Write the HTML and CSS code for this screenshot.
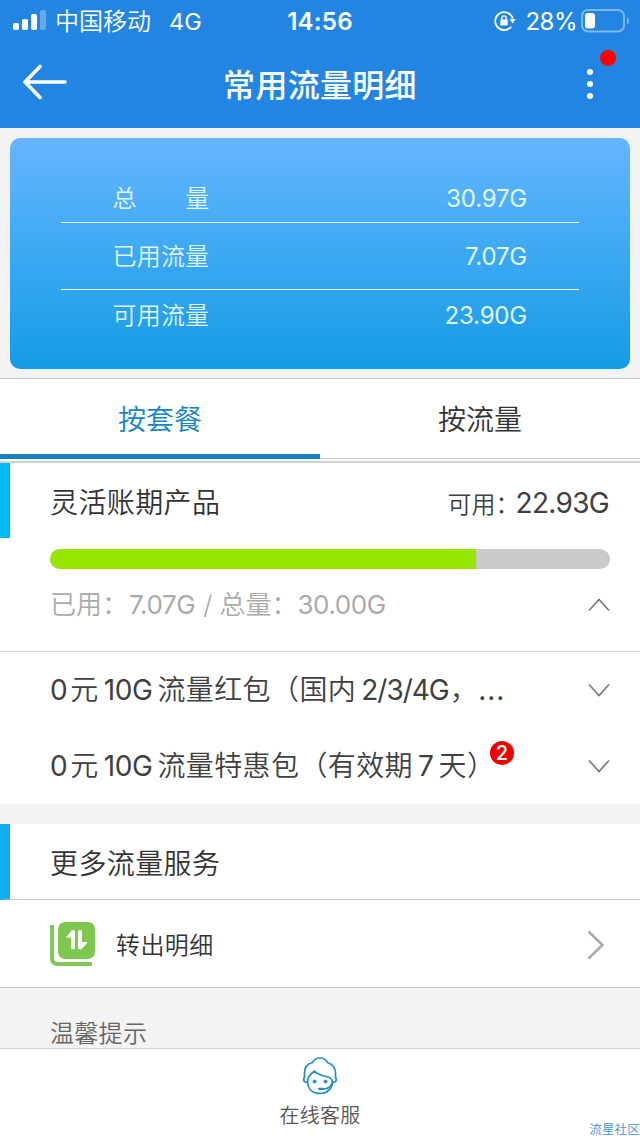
FILE: index.html
```html
<!DOCTYPE html>
<html lang="zh-CN">
<head>
<meta charset="utf-8">
<title>常用流量明细</title>
<link rel="stylesheet" href="styles.css">
</head>
<body>
<div class="screen">
  <header class="header">
    <div class="status">
      <div class="status-left">
        <svg class="signal" width="34" height="22" viewBox="0 0 34 22" fill="#fff"><rect x="0" y="14" width="6" height="7" rx="1.8"/><rect x="9" y="10" width="6" height="11" rx="1.8"/><rect x="18" y="5" width="6" height="16" rx="1.8"/><rect x="27" y="1" width="6" height="20" rx="1.8" opacity=".3"/></svg>
        <span class="carrier">中国移动</span><span class="network">4G</span>
      </div>
      <div class="clock">14:56</div>
      <div class="status-right">
        <svg width="22" height="22" viewBox="0 0 22 22" fill="none" stroke="#fff" stroke-width="1.8"><path d="M17.2 16.800A9 9 0 1 1 18.800 8.500"/><path d="M15.500 9h6.200l-3.100 4.500z" fill="#fff" stroke="none"/><rect x="6.300" y="9.400" width="7.400" height="6" rx="1" fill="#fff" stroke="none"/><path d="M7.900 10V8a2.100 2.100 0 0 1 4.200 0v2" stroke-width="1.400"/></svg>
        <span class="percent">28%</span>
        <svg class="battery" width="49" height="24" viewBox="0 0 49 24"><rect x="1" y="1" width="42" height="21.500" rx="6" fill="none" stroke="#fff" stroke-width="2" opacity=".42"/><rect x="4" y="4" width="10" height="15.500" rx="3" fill="#fff"/><path d="M46 8q2 1 2 3.800T46 15.500z" fill="#fff" opacity=".42"/></svg>
      </div>
    </div>
    <div class="nav">
      <svg class="back" width="46" height="36" viewBox="0 0 46 36" fill="none" stroke="#fff" stroke-width="3.600" stroke-linecap="round" stroke-linejoin="round"><path d="M18 2.500L3 18l15 15.500M3 18h40"/></svg>
      <h1 class="title">常用流量明细</h1>
      <div class="more"><i></i><i></i><i></i><b class="alert"></b></div>
    </div>
  </header>

  <section class="summary">
    <div class="sum-row first"><span class="spread"><span>总</span><span>量</span></span><span>30.97G</span></div>
    <div class="sum-row second"><span class="zh">已用流量</span><span>7.07G</span></div>
    <div class="sum-row third"><span class="zh">可用流量</span><span>23.90G</span></div>
  </section>

  <nav class="tabs">
    <div class="tab active">按套餐</div>
    <div class="tab">按流量</div>
  </nav>

  <section class="plan">
    <div class="section-head">
      <h2 class="heading">灵活账期产品</h2>
      <div class="left"><span class="left-label">可用：</span><span class="left-value">22.93G</span></div>
    </div>
    <div class="bar"><div class="fill" style="width:76.1%"></div></div>
    <div class="usage">
      <div class="usage-text"><span class="u-label">已用：</span><span class="u-num used">7.07G</span><span class="slash">/</span><span class="u-label total">总量：</span><span class="u-num">30.00G</span></div>
      <svg class="chevron" width="22" height="14" viewBox="0 0 22 14"><path d="M1 12.500L11 1.500l10 11"/></svg>
    </div>
  </section>

  <section class="packs">
    <div class="pack"><div class="pack-name"><span class="n zero">0</span><span>元</span><span class="n mid">10G</span><span>流量红包（国内</span><span class="n frac">2/3/4G</span><span>，</span><span class="dots">...</span></div>
      <svg class="chevron" width="22" height="14" viewBox="0 0 22 14"><path d="M1 1.500l10 11 10-11"/></svg></div>
    <div class="pack"><div class="pack-name"><span class="n zero">0</span><span>元</span><span class="n mid">10G</span><span>流量特惠包（有效期</span><span class="n seven">7</span><span>天）</span><b class="badge">2</b></div>
      <svg class="chevron" width="22" height="14" viewBox="0 0 22 14"><path d="M1 1.500l10 11 10-11"/></svg></div>
  </section>

  <section class="services">
    <div class="section-head service-head"><h2 class="heading">更多流量服务</h2></div>
    <div class="service">
      <svg class="transfer" width="46" height="45" viewBox="0 0 46 45"><path d="M2 3v33q0 6 6 6h34" fill="none" stroke="#82c55b" stroke-width="4"/><rect x="8" y="0" width="37" height="37" rx="7" fill="#7ec850"/><path d="M23 10v15.500M30 10v15.500" fill="none" stroke="#fff" stroke-width="4" stroke-linecap="round"/><path d="M16.500 15l6-6.500v6.500zM30.500 20.500h6.500l-6 6.500z" fill="#fff" stroke="#fff" stroke-linejoin="round"/></svg>
      <span class="service-name">转出明细</span>
      <svg class="go" width="18" height="30" viewBox="0 0 18 30"><path d="M1.500 1.500L15.500 15 1.500 28.500" fill="none" stroke="#aaa" stroke-width="2.500"/></svg>
    </div>
  </section>

  <div class="tips">温馨提示</div>

  <footer class="support">
    <svg width="36" height="38" viewBox="0 0 36 38" fill="none" stroke="#238dc6" stroke-width="1.700" stroke-linejoin="round" stroke-linecap="round"><path d="M5.500 25.500C1.500 25.500 1 23 2.500 20V16C2.500 10 6 6.500 10.500 5.500 12 2.500 15 1 18 1s6 1.500 7.500 4.500C30 7 33.500 10 33.500 16v4c1.500 3 1 5.500-3 5.500"/><path d="M5.500 25.500C5.500 20 8 17.500 12.500 14c3 4 10 5 13.500 6 3 1 4.500 2.500 4.500 5.500C30 32 25 36.500 18 36.500S6 32.500 5.500 25.500z"/><path d="M30 26c-1 4-5 6-9 6"/><path d="M17 31.800h4" stroke-width="2.200"/><circle cx="12.500" cy="24.500" r="1.500" fill="#238dc6" stroke-width="1"/><circle cx="23.500" cy="24.500" r="1.500" fill="#238dc6" stroke-width="1"/></svg>
    <span class="support-name">在线客服</span>
    <span class="watermark">流星社区</span>
  </footer>
</div>
</body>
</html>
```
FILE: styles.css
```css
* { box-sizing: border-box; }
body { margin: 0; background: #f3f3f3; font-family: Inter, "Noto Sans CJK SC", sans-serif; font-weight: 350; color: #333; }
h1, h2 { margin: 0; font-weight: 350; }
svg { display: block; flex: none; }
.screen { width: 640px; height: 1136px; display: flex; flex-direction: column; overflow: hidden; }
span { white-space: nowrap; }

.header { height: 128px; background: #2385e2; color: #fff; flex: none; }
.status { height: 40px; display: grid; grid-template-columns: 1fr auto 1fr; align-items: center; }
.status-left { display: flex; align-items: center; padding-left: 13px; }
.signal { margin-top: -2px; }
.carrier { font-size: 24px; line-height: 40px; margin: 2px 0 0 8px; }
.network { font-size: 23.5px; margin: 2px 0 0 18px; line-height: 40px; font-weight: 400; }
.clock { font-size: 24px; font-weight: 600; line-height: 40px; padding-top: 2px; letter-spacing: .3px; }
.status-right { display: flex; align-items: center; justify-content: flex-end; padding-right: 10px; }
.percent { font-size: 24px; line-height: 40px; margin: 1px 4px 0 10px; letter-spacing: -.5px; font-weight: 400; }
.status-right svg:first-child { margin-right: -1px; }
.nav { height: 88px; display: grid; grid-template-columns: 1fr auto 1fr; align-items: center; }
.back { margin: -5px 0 0 22px; }
.title { font-size: 32px; font-weight: 500; line-height: 80px; padding-top: 4px; letter-spacing: .3px; }
.more { justify-self: end; width: 6px; margin-right: 47px; display: flex; flex-direction: column; gap: 6px; position: relative; }
.more i { width: 6px; height: 6px; border-radius: 50%; background: #fff; }
.alert { position: absolute; left: 13px; top: -19px; width: 16px; height: 16px; border-radius: 50%; background: #f00; }

.summary { flex: none; margin: 10px 10px 9px; height: 231px; padding: 37px 51px 0; border-radius: 10px; background: linear-gradient(#65b6ff, #149be6); color: #e2f6ff; }
.sum-row { display: flex; justify-content: space-between; padding: 0 52px 0 51.5px; font-size: 24px; letter-spacing: .2px; }
.sum-row > span:last-child { letter-spacing: -.2px; font-weight: 400; }
.first { height: 48px; line-height: 48px; border-bottom: 1px solid #fff; }
.second { height: 67px; line-height: 67px; border-bottom: 1px solid #fff; }
.third { line-height: 52px; }
.spread { width: 97px; display: flex; justify-content: space-between; }

.tabs { flex: none; height: 85px; display: grid; grid-template-columns: 1fr 1fr; align-items: start; background: #fff; border-top: 1px solid #c8c8c8; border-bottom: 2px solid #d2d2d2; }
.tab { height: 80px; line-height: 82px; text-align: center; font-size: 28px; border-bottom: 1px solid #c8c8c8; }
.active { color: #1284c7; border-bottom: 5px solid #1680c3; }

.plan { flex: none; height: 189px; background: #fff; border-bottom: 1px solid #d2d2d2; }
.section-head { height: 75px; display: flex; justify-content: space-between; padding: 0 31px 0 40px; border-left: 10px solid #00baf2; }
.heading { font-size: 28px; letter-spacing: .4px; line-height: 81px; }
.left { display: flex; align-items: baseline; line-height: 80px; color: #404040; }
.left-label { font-size: 24px; margin-right: -4px; }
.left-value { font-size: 28px; letter-spacing: -.7px; font-weight: 400; }
.bar { height: 20px; margin: 11px 30px 0 50px; border-radius: 10px; overflow: hidden; background: #cacaca; }
.fill { height: 100%; background: #97e600; }
.usage { height: 72px; padding: 0 30px 0 50px; display: flex; align-items: center; justify-content: space-between; color: #aaa; }
.usage-text { display: flex; font-size: 26px; line-height: 74px; }
.u-num { letter-spacing: -.4px; font-weight: 400; }
.used { margin-left: 1px; }
.slash { margin: 0 7px 0 8px; }
.chevron { fill: none; stroke: #777; stroke-width: 1.6; }

.packs { flex: none; background: #fff; }
.pack { height: 76px; padding: 0 30px 0 50px; display: flex; align-items: center; justify-content: space-between; }
.pack-name { position: relative; display: flex; font-size: 28px; line-height: 79px; letter-spacing: .4px; color: #404040; }
.n { margin-right: 5px; letter-spacing: -.4px; font-weight: 400; }
.zero { margin-right: 3px; }
.mid { margin-left: 5px; }
.frac { margin: 0 1px 0 5px; letter-spacing: -1px; }
.dots { letter-spacing: 1px; font-weight: 400; }
.seven { margin-left: 5px; }
.badge { position: absolute; left: 440px; top: 14px; width: 24px; height: 24px; border-radius: 50%; background: #f00000; color: #fff; font-size: 20px; line-height: 24px; text-align: center; font-weight: 500; }

.services { flex: none; margin-top: 20px; background: #fff; }
.service-head { height: 76px; border-left-color: #12aeef; border-bottom: 1px solid #c8c8c8; }
.service-head .heading { line-height: 80px; }
.service { height: 88px; padding: 0 35px 0 50px; display: flex; align-items: center; border-bottom: 1px solid #c8c8c8; }
.transfer { margin-top: 1px; }
.service-name { font-size: 24px; letter-spacing: .4px; line-height: 88px; margin: 4px 0 0 20px; }
.go { margin: 2px 0 0 auto; }
.tips { flex: none; height: 60px; padding: 16px 50px 0; line-height: 60px; font-size: 24px; letter-spacing: .3px; color: #666; overflow: hidden; }
.support { position: relative; flex: none; height: 88px; background: #fff; border-top: 1px solid #d2d2d2; display: flex; flex-direction: column; align-items: center; padding-top: 8px; }
.support-name { font-size: 20px; line-height: 36px; letter-spacing: .2px; color: #555; margin-top: 3px; }
.watermark { position: absolute; right: 0; bottom: 0; color: #3f8fe0; font-size: 12.5px; line-height: 12px; letter-spacing: .2px; }
```
